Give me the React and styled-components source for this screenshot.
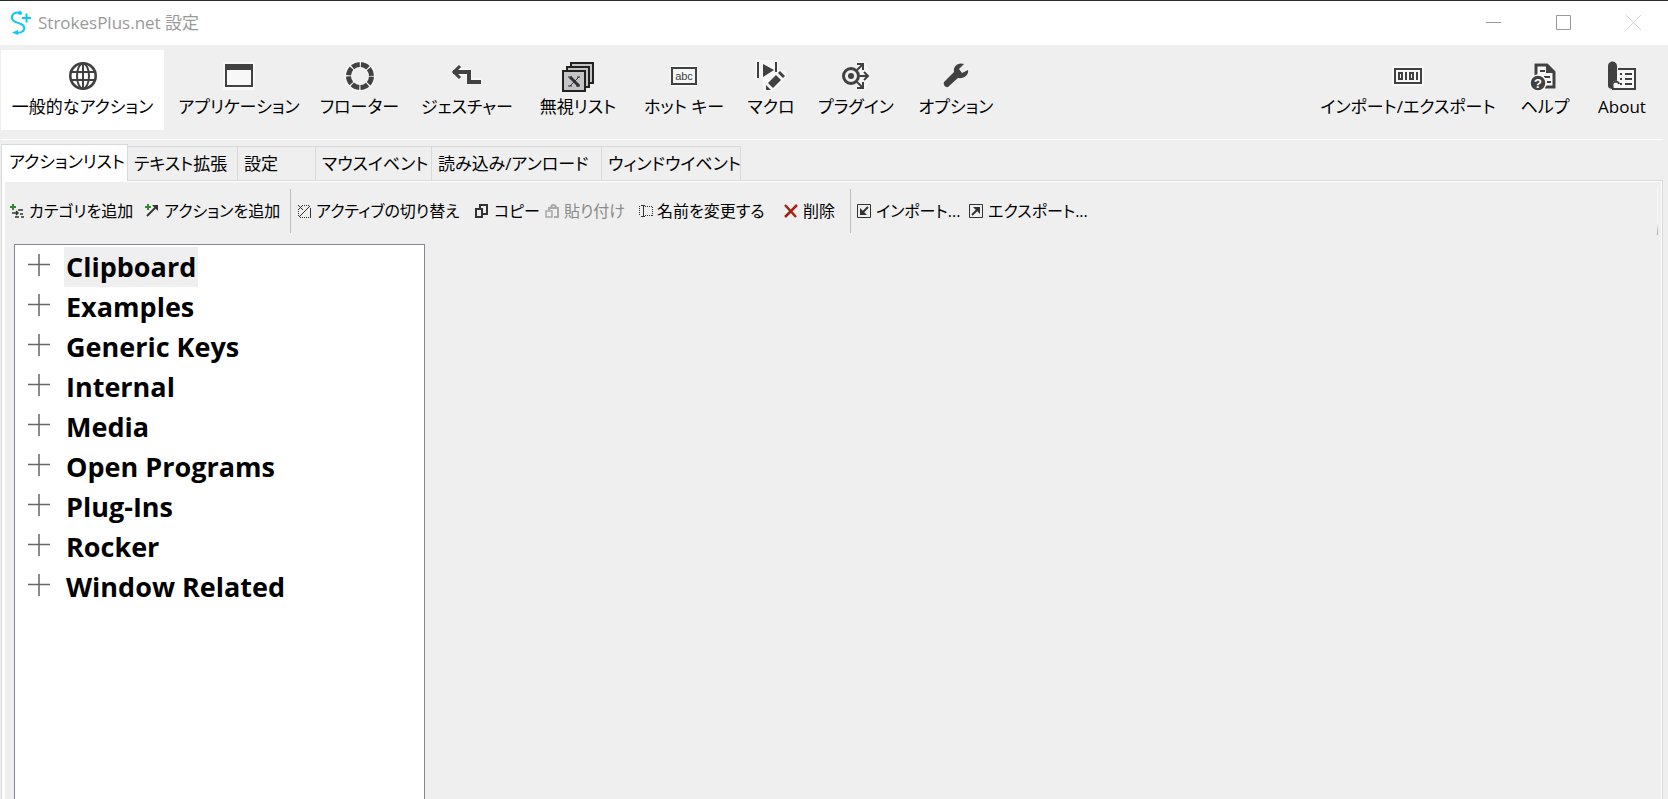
import React, { useState } from 'react';
import styled, { createGlobalStyle } from 'styled-components';

const GlobalStyle = createGlobalStyle`
  * {
    box-sizing: border-box;
  }
  body {
    margin: 0;
    background: #efefef;
    color: #000;
    font-family: 'Open Sans', 'Noto Sans CJK JP', sans-serif;
    font-feature-settings: 'palt';
  }
  button {
    border: 0;
    padding: 0;
    background: none;
    color: inherit;
    font: inherit;
    font-feature-settings: inherit;
    white-space: nowrap;
  }
  svg {
    display: block;
    flex: none;
  }
`;

const Window = styled.div`
  display: flex;
  flex-direction: column;
  height: 100vh;
  overflow: hidden;
  border-top: 1px solid #2b2b2b;
`;

const TitleBar = styled.header`
  display: flex;
  align-items: center;
  height: 44px;
  flex: none;
  padding-left: 10px;
  background: #fff;
  color: #999;
`;

const Title = styled.h1`
  flex: 1;
  margin: 0 0 0 6px;
  font-size: 17px;
  line-height: 24px;
  font-weight: 400;
`;

const WindowButton = styled.button`
  display: flex;
  align-items: center;
  justify-content: center;
  width: 70px;
  height: 42px;
  margin-bottom: 2px;
  color: ${(props) => (props.$faded ? '#d4d4d4' : '#999')};
`;

const MainToolbar = styled.nav`
  display: flex;
  flex: none;
  gap: 10px;
  margin: 0 5px 0 1px;
  padding: 5px 6px 9px 0;
  border-bottom: 1px solid #fff;
`;

const Spacer = styled.div`
  flex: 1;
`;

const MainButton = styled.button`
  display: flex;
  flex-direction: column;
  align-items: center;
  width: ${(props) => props.$width}px;
  height: 80px;
  padding-top: 10px;
  background: ${(props) => (props.$active ? '#fff' : 'transparent')};
  font-size: 17px;
  line-height: 30px;
`;

const TabStrip = styled.div`
  display: flex;
  flex: none;
  align-items: flex-end;
  height: 40px;
  margin: 0 5px 0 1px;
`;

const Tab = styled.button`
  width: ${(props) => props.$width}px;
  height: ${(props) => (props.$active ? 37 : 34)}px;
  padding: ${(props) => (props.$active ? '0 0 3px 7px' : '0 0 0 6px')};
  border: 1px solid #d9d9d9;
  border-width: 1px 1px 0 ${(props) => (props.$active ? 1 : 0)}px;
  background: ${(props) => (props.$active ? '#fff' : '#efefef')};
  position: relative;
  margin-bottom: ${(props) => (props.$active ? -1 : 0)}px;
  text-align: left;
  font-size: 17px;
  line-height: 32px;
`;

const TabPanel = styled.section`
  display: flex;
  flex: 1;
  flex-direction: column;
  min-height: 0;
  margin: 0 5px 0 1px;
  border: solid #d9d9d9;
  border-width: 1px 1px 0 1px;
  box-shadow: inset 3px 0 #fdfdfd, inset -1px 1px #fdfdfd;
`;

const ActionBar = styled.div`
  display: flex;
  flex: none;
  align-items: center;
  height: 59px;
  padding: 1px 0 0 7px;
`;

const ActionButton = styled.button`
  display: flex;
  align-items: center;
  gap: 4px;
  width: ${(props) => props.$width}px;
  font-size: 16px;
  line-height: 24px;

  &:disabled {
    color: #8a8a8a;
  }
`;

const Separator = styled.div`
  width: 1px;
  height: 44px;
  margin-right: 5px;
  background: #bdbdbd;
`;

const Overflow = styled.div`
  width: 1px;
  height: 48px;
  margin: 0 4px 0 auto;
  background: linear-gradient(#f8f8f8 75%, #a0a0a0);
`;

const Tree = styled.ul`
  flex: 1;
  width: 411px;
  margin: 4px 0 0 12px;
  padding: 2px 0 0 13px;
  border: 1px solid #828790;
  border-bottom: 0;
  background: #fff;
  list-style: none;
`;

const TreeRow = styled.li`
  display: flex;
  align-items: center;
  gap: 14px;
  height: 40px;
`;

const Expander = styled.button`
  padding-bottom: 4px;
`;

const TreeLabel = styled.button`
  height: 40px;
  padding: 0 2px;
  background: ${(props) => (props.$selected ? '#efefef' : 'transparent')};
  font-size: 27px;
  font-weight: 700;
  line-height: 40px;
`;

const Logo = () => (
  <svg width="22" height="26" viewBox="0 0 22 26" fill="none" stroke="#0bc8fa" strokeWidth="2">
    <path d="M10 3C5 1 1 5 2 8.500c1 4 5 3.500 9 5.500 4 2 4 5 2 7-1.500 1.500-3 2-6 1.800" />
    <circle cx="10" cy="3" r="2" fill="#0bc8fa" stroke="none" />
    <path d="M2 22.500l6-2.500v5z" fill="#0bc8fa" stroke="none" />
    <path d="M12 8h9M16.500 3.500v9" />
  </svg>
);

const Icon = ({ children }) => (
  <svg width="32" height="32" viewBox="0 0 32 32" fill="none" stroke="#414141" strokeWidth="2">
    {children}
  </svg>
);

const mainIcons = {
  globe: (
    <Icon>
      <circle cx="16" cy="16" r="12.700" strokeWidth="2.600" />
      <ellipse cx="16" cy="16" rx="6" ry="12.500" />
      <path d="M16 3v26M4.500 12h23M4.500 20h23" />
    </Icon>
  ),
  app: (
    <Icon>
      <path d="M0 2h32v28H0z" fill="#f7f7f7" stroke="none" />
      <path d="M3 5h26v21H3z" />
      <path d="M2 4h28v6H2z" fill="#414141" stroke="none" />
    </Icon>
  ),
  floater: (
    <Icon>
      <circle cx="16" cy="16" r="11.700" stroke="#f8f8f8" strokeWidth="7" />
      <circle cx="16" cy="16" r="11.500" strokeWidth="5" strokeDasharray="7.830 1.200" strokeDashoffset="-.6" />
    </Icon>
  ),
  gesture: (
    <Icon>
      <path d="M4 12h14v9h13" stroke="#f7f7f7" strokeWidth="6" />
      <path d="M2 12h16v10h12" strokeWidth="4" />
      <path d="M9 6l-6 6 6 6" strokeWidth="3" />
    </Icon>
  ),
  ignore: (
    <Icon>
      <g stroke="#222" fill="#c4c4c4">
        <path d="M9 3h22v20H9z" />
        <path d="M5 7h22v20H5z" />
        <path d="M1 11h22v20H1z" />
      </g>
      <path d="M8 17l9 9" stroke="#30323a" strokeWidth="3" />
      <path d="M17 17l-9 9M6 17h4M15 17h3M6 26h4M14 26h4" stroke="#30323a" strokeWidth="1" />
    </Icon>
  ),
  hotkey: (
    <Icon>
      <path d="M2 5h28v22H2z" fill="#f8f8f8" stroke="none" />
      <path d="M4 8h24v16H4z" />
      <text x="16" y="20" fill="#414141" stroke="none" fontFamily="Liberation Sans" fontSize="11" textAnchor="middle">
        abc
      </text>
    </Icon>
  ),
  macro: (
    <Icon>
      <path d="M0 0h24v10h7v8L18 31H8V18H0z" fill="#f7f7f7" stroke="none" />
      <path d="M3 2v16M21 2v10" />
      <path d="M8 4l11 6-11 7z" fill="#414141" stroke="none" />
      <path d="M13 23l8-8 5 5-8 8zM23 13l2-2 5 5-2 2zM11 25l5 5h-5z" fill="#414141" stroke="none" />
    </Icon>
  ),
  plugin: (
    <Icon>
      <path d="M17 2h8l5 10v8l-5 10h-8z" fill="#f5f5f5" stroke="none" />
      <circle cx="11" cy="16" r="7.500" strokeWidth="3" />
      <circle cx="11" cy="16" r="3" fill="#414141" stroke="none" />
      <path d="M17 10l6-6M17 4h6v6M17 22l6 6M17 28h6v-6M20 16h7M24 12l4 4-4 4" />
    </Icon>
  ),
  wrench: (
    <Icon>
      <path
        d="M28 10l-6 3-3-4 5-5c-6-2-11 2-10 8L4 22c-1 2 1 6 4 5l10-9c6 1 11-3 10-8z"
        fill="#414141"
        stroke="none"
      />
    </Icon>
  ),
  binary: (
    <Icon>
      <path d="M0 6h32v20H0z" fill="#f8f8f8" stroke="none" />
      <path d="M3 9h26v14H3z" />
      <path d="M7 13h3v6H7zM14 12v8M18 13h3v6h-3zM25 12v8" />
    </Icon>
  ),
  help: (
    <Icon>
      <path d="M5 3h14l8 8v18H5z" fill="#f8f8f8" stroke="none" />
      <path d="M7 16V5h11l7 7v15h-9" strokeWidth="3" />
      <path d="M17 5v8h8z" fill="#414141" stroke="none" />
      <path d="M11 11h5M15 17h6M18 22h4" />
      <circle cx="9" cy="23" r="8" fill="#414141" stroke="#f8f8f8" strokeWidth="1.500" />
      <text x="9" y="28" fill="#fff" stroke="none" fontFamily="Liberation Sans" fontSize="13" fontWeight="700" textAnchor="middle">
        ?
      </text>
    </Icon>
  ),
  about: (
    <Icon>
      <path d="M12 9h17v20H6" fill="#f8f8f8" />
      <path d="M2 26V6c0-6 9-6 9 0v15c-4-1-6 2-4 8-3 0-5-1-5-3z" fill="#414141" stroke="none" />
      <path d="M7 28c-3-7 5-8 6-4" />
      <path d="M14 14h2M19 14h7M14 19h2M19 19h7M14 24h2M19 24h7" />
    </Icon>
  ),
};

const SmallIcon = ({ children, color = '#333' }) => (
  <svg width="16" height="16" viewBox="0 0 16 16" fill="none" stroke={color} strokeWidth="1.500">
    {children}
  </svg>
);

const actionIcons = {
  category: (
    <SmallIcon>
      <path d="M1 4h6M4 1v6" stroke="#2e8b2e" strokeWidth="2" />
      <path d="M9 7h5M3 10h6M7 8l2 2-2 2M11 11h3M6 14h4M12 14h3" />
    </SmallIcon>
  ),
  action: (
    <SmallIcon>
      <path d="M1 4h6M4 1v6" stroke="#2e8b2e" strokeWidth="2" />
      <path d="M3 13l9-9" strokeWidth="2" />
      <path d="M8 2h6v6z" fill="#333" stroke="none" />
    </SmallIcon>
  ),
  toggle: (
    <SmallIcon>
      <path d="M2 2l5 5M7 2L2 7M3 14L14 3" strokeWidth="1" />
      <path d="M8 2.500h6M2.500 8v6M4 14.500h10" strokeWidth="1" strokeDasharray="1 1" />
      <path d="M14.500 5v10" strokeWidth="1" />
    </SmallIcon>
  ),
  copy: (
    <SmallIcon>
      <path d="M6 5V2h7v9H9" strokeWidth="2" />
      <path d="M2 6h6v8H2z" strokeWidth="2" />
    </SmallIcon>
  ),
  paste: (
    <SmallIcon color="#aaa">
      <path d="M5 7V5h9v9h-4M7 5c0-4 5-4 5 0" strokeWidth="2" />
      <path d="M2 8h6v6H2z" fill="#efefef" />
    </SmallIcon>
  ),
  rename: (
    <SmallIcon>
      <path d="M4 2.500h4M6.500 3v10M4 13.500h4" strokeWidth="1" />
      <path d="M2.500 3v10M8 3.500h7M8 12.500h7M15.500 4v9" strokeWidth="1" strokeDasharray="1 1" />
    </SmallIcon>
  ),
  remove: (
    <SmallIcon color="#a52314">
      <path d="M2 2l11 12M14 2L2 14" strokeWidth="2.500" />
    </SmallIcon>
  ),
  importIcon: (
    <SmallIcon>
      <path d="M1.500 1.500h13v13h-13z" strokeWidth="1" />
      <path d="M12 4l-5 5" strokeWidth="2" />
      <path d="M4 5v7h7z" fill="#333" stroke="none" />
    </SmallIcon>
  ),
  exportIcon: (
    <SmallIcon>
      <path d="M1.500 1.500h13v13h-13z" strokeWidth="1" />
      <path d="M4 12l5-5" strokeWidth="2" />
      <path d="M5 4h7v7z" fill="#333" stroke="none" />
    </SmallIcon>
  ),
};

const mainItems = [
  { label: '一般的なアクション', icon: 'globe', width: 163 },
  { label: 'アプリケーション', icon: 'app', width: 130 },
  { label: 'フローター', icon: 'floater', width: 91 },
  { label: 'ジェスチャー', icon: 'gesture', width: 104 },
  { label: '無視リスト', icon: 'ignore', width: 98 },
  { label: 'ホット キー', icon: 'hotkey', width: 94 },
  { label: 'マクロ', icon: 'macro', width: 60 },
  { label: 'プラグイン', icon: 'plugin', width: 90 },
  { label: 'オプション', icon: 'wrench', width: 90 },
];

const sideItems = [
  { label: 'インポート/エクスポート', icon: 'binary', width: 190 },
  { label: 'ヘルプ', icon: 'help', width: 64 },
  { label: 'About', icon: 'about', width: 70 },
];

const tabs = [
  { label: 'アクションリスト', width: 127 },
  { label: 'テキスト拡張', width: 110 },
  { label: '設定', width: 78 },
  { label: 'マウスイベント', width: 116 },
  { label: '読み込み/アンロード', width: 170 },
  { label: 'ウィンドウイベント', width: 139 },
];

const actionGroups = [
  [
    { label: 'カテゴリを追加', icon: 'category', width: 135 },
    { label: 'アクションを追加', icon: 'action', width: 146 },
  ],
  [
    { label: 'アクティブの切り替え', icon: 'toggle', width: 178 },
    { label: 'コピー', icon: 'copy', width: 70 },
    { label: '貼り付け', icon: 'paste', width: 93, disabled: true },
    { label: '名前を変更する', icon: 'rename', width: 146 },
    { label: '削除', icon: 'remove', width: 67 },
  ],
  [
    { label: 'インポート...', icon: 'importIcon', width: 112 },
    { label: 'エクスポート...', icon: 'exportIcon', width: 120 },
  ],
];

const categories = [
  'Clipboard',
  'Examples',
  'Generic Keys',
  'Internal',
  'Media',
  'Open Programs',
  'Plug-Ins',
  'Rocker',
  'Window Related',
];

const App = () => {
  const [page, setPage] = useState('一般的なアクション');
  const [tab, setTab] = useState('アクションリスト');
  const [selected, setSelected] = useState('Clipboard');

  const renderMainItem = (item) => (
    <MainButton
      key={item.label}
      $width={item.width}
      $active={page === item.label}
      onClick={() => setPage(item.label)}
    >
      {mainIcons[item.icon]}
      {item.label}
    </MainButton>
  );

  return (
    <>
      <GlobalStyle />
      <Window>
        <TitleBar>
          <Logo />
          <Title>StrokesPlus.net 設定</Title>
          <WindowButton aria-label="Minimize">
            <svg width="15" height="15" stroke="currentColor">
              <path d="M0 7.500h15" />
            </svg>
          </WindowButton>
          <WindowButton aria-label="Maximize">
            <svg width="15" height="15" fill="none" stroke="currentColor">
              <path d="M.5.5h14v14H.5z" />
            </svg>
          </WindowButton>
          <WindowButton aria-label="Close" $faded>
            <svg width="15" height="15" stroke="currentColor">
              <path d="M0 0l15 15M15 0L0 15" />
            </svg>
          </WindowButton>
        </TitleBar>
        <MainToolbar>
          {mainItems.map(renderMainItem)}
          <Spacer />
          {sideItems.map(renderMainItem)}
        </MainToolbar>
        <TabStrip role="tablist">
          {tabs.map(({ label, width }) => (
            <Tab
              key={label}
              role="tab"
              aria-selected={tab === label}
              $width={width}
              $active={tab === label}
              onClick={() => setTab(label)}
            >
              {label}
            </Tab>
          ))}
        </TabStrip>
        <TabPanel>
          <ActionBar>
            {actionGroups.map((group, index) => (
              <React.Fragment key={index}>
                {index > 0 && <Separator />}
                {group.map(({ label, icon, width, disabled }) => (
                  <ActionButton key={label} $width={width} disabled={disabled}>
                    {actionIcons[icon]}
                    {label}
                  </ActionButton>
                ))}
              </React.Fragment>
            ))}
            <Overflow />
          </ActionBar>
          <Tree>
            {categories.map((name) => (
              <TreeRow key={name}>
                <Expander aria-label={`Expand ${name}`}>
                  <svg width="22" height="22" stroke="#666" strokeWidth="1.500">
                    <path d="M0 10.500h22M11 0v22" />
                  </svg>
                </Expander>
                <TreeLabel $selected={selected === name} onClick={() => setSelected(name)}>
                  {name}
                </TreeLabel>
              </TreeRow>
            ))}
          </Tree>
        </TabPanel>
      </Window>
    </>
  );
};

export default App;
